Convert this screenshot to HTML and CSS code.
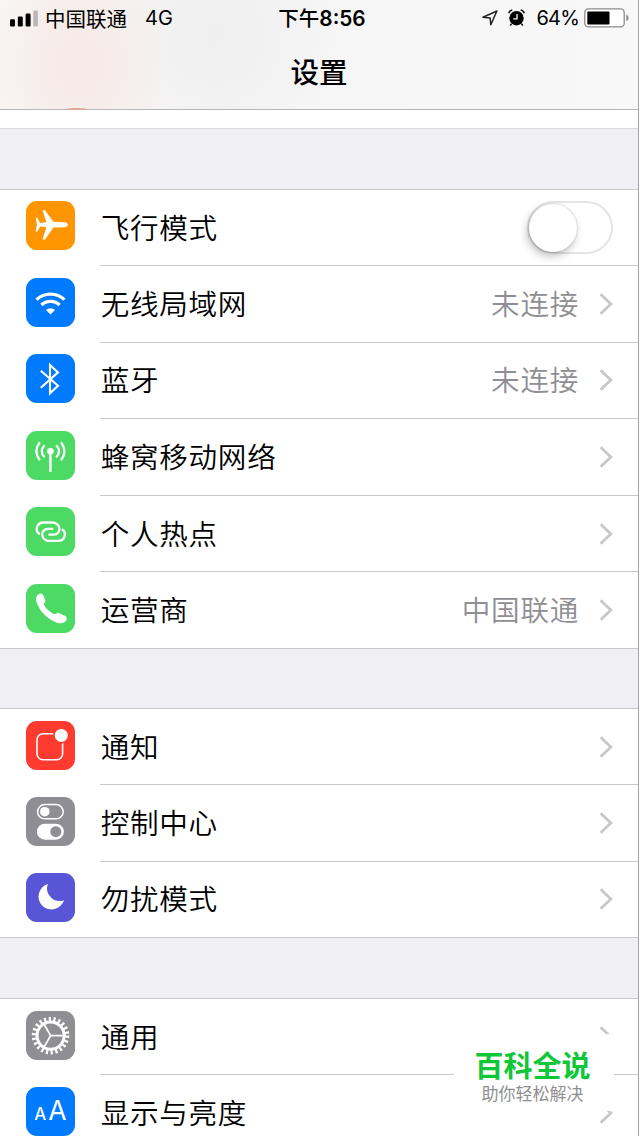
FILE: index.html
```html
<!DOCTYPE html>
<html lang="zh-CN">
<head>
    <meta charset="UTF-8">
    <meta name="viewport" content="width=device-width, initial-scale=1.0">
    <title>设置</title>
    <link rel="stylesheet" href="styles.css">
</head>
<body>
<svg class="defs" width="0" height="0">
    <symbol id="chevron" viewBox="0 0 14 22">
        <path d="M1.6 1.2L11.9 11L1.6 20.8" fill="none" stroke="#c7c7cc" stroke-width="2.8"/>
    </symbol>
</svg>
<div class="phone">
    <header class="header">
        <div class="status-bar">
            <div class="status-left">
                <svg class="signal" width="28" height="17" viewBox="0 0 28 17">
                    <rect x="0" y="9.3" width="5" height="7.2" rx="1.3"/>
                    <rect x="7.8" y="6.6" width="5" height="9.9" rx="1.3"/>
                    <rect x="15.6" y="3.6" width="5" height="12.9" rx="1.3"/>
                    <rect x="23.3" y="0.4" width="4.6" height="16.1" rx="1.3" fill="#b9b8b8"/>
                </svg>
                <span class="carrier">中国联通</span>
                <span class="network">4G</span>
            </div>
            <div class="status-time">下午<b>8:56</b></div>
            <div class="status-right">
                <svg class="location" width="16" height="16" viewBox="0 0 16 16">
                    <path d="M14.9 1L8.8 14.8L8.1 7.9L1 7.2Z" fill="none" stroke="#222" stroke-width="1.5" stroke-linejoin="round"/>
                </svg>
                <svg class="alarm" width="17" height="18" viewBox="0 0 17 18">
                    <circle cx="8.5" cy="9.2" r="7.2"/>
                    <path d="M.8 4.2Q1.5 1.5 4.3 1M16.2 4.2Q15.5 1.5 12.7 1M3.6 14.7L2.2 16.5M13.4 14.7L14.8 16.5" fill="none" stroke="#111" stroke-width="1.5"/>
                    <path d="M9 5v4.8H5.3" fill="none" stroke="#fff" stroke-width="1.3"/>
                </svg>
                <span class="percent">64%</span>
                <svg class="battery" width="46" height="20" viewBox="0 0 46 20">
                    <rect x=".8" y=".9" width="39.4" height="18" rx="3.6" fill="#fff" stroke="#8b8b8b" stroke-width="1.3"/>
                    <rect x="3.3" y="3.5" width="22.2" height="12.9" rx="1"/>
                    <path d="M42.3 6.6Q44.6 7.4 44.6 10T42.3 13.3Z" fill="#8b8b8b"/>
                </svg>
            </div>
        </div>
        <h1 class="title">设置</h1>
        <div class="peek"></div>
    </header>

    <main>
        <div class="group-tail"></div>

        <ul class="group connect">
            <li class="row">
                <svg class="icon orange" viewBox="0 0 49 49">
                    <path fill="#fff" d="M41.8 23.7c0 1.5-1.3 2.5-3.2 2.5L27.4 26.6L19 38.4H16.5L20.4 26.2L14.2 25.5L11.2 30.8H9.7L10.9 23.7L9.7 16.7h1.5L14.2 21.9L20.4 21.2L16.5 9.2H19L27.4 20.8L38.6 21.2c1.9 0 3.2 1 3.2 2.5z"/>
                </svg>
                <div class="cell"><span class="label">飞行模式</span><span class="switch"></span></div>
            </li>
            <li class="row">
                <svg class="icon blue" viewBox="0 0 49 49">
                    <g fill="none" stroke="#fff" stroke-width="3.3">
                        <path d="M10.5 21.6A20.4 20.4 0 0 1 38.5 21.6"/>
                        <path d="M15.4 27A13.2 13.2 0 0 1 33.6 27"/>
                    </g>
                    <path fill="#fff" d="M24.5 36.6L20 32A6.5 6.5 0 0 1 29 32z"/>
                </svg>
                <div class="cell"><span class="label">无线局域网</span><span class="value">未连接</span><svg class="chevron"><use href="#chevron"/></svg></div>
            </li>
            <li class="row">
                <svg class="icon blue" viewBox="0 0 49 49">
                    <path fill="none" stroke="#fff" stroke-width="2.1" d="M14.8 16.8L32 31.8L24 39.3V10.9L32 18.4L14.8 33.8"/>
                </svg>
                <div class="cell"><span class="label">蓝牙</span><span class="value">未连接</span><svg class="chevron"><use href="#chevron"/></svg></div>
            </li>
            <li class="row">
                <svg class="icon green" viewBox="0 0 49 49">
                    <circle cx="24.4" cy="20.2" r="3.3" fill="#fff"/>
                    <g fill="none" stroke="#fff" stroke-width="2.2">
                        <path d="M24.4 21V40.8" stroke-width="2.5"/>
                        <path d="M13.8 11.2Q6.8 20.2 13.8 29.2M35 11.2Q42 20.2 35 29.2M18.6 14.2Q12.8 20.2 18.6 26.2M30.2 14.2Q36 20.2 30.2 26.2"/>
                    </g>
                </svg>
                <div class="cell"><span class="label">蜂窝移动网络</span><svg class="chevron"><use href="#chevron"/></svg></div>
            </li>
            <li class="row">
                <svg class="icon green" viewBox="0 0 49 49">
                    <g fill="none" stroke="#fff" stroke-width="2.3">
                        <path d="M13.8 27.2C8.6 24.4 10.2 15.5 17.6 15.5H25.6C35.4 15.5 36 27.6 27.4 27.6H22.4"/>
                        <path d="M35.8 22.2C41 25 39.4 33.9 32 33.9H24C14.2 33.9 13.6 21.8 22.2 21.8H27.2"/>
                    </g>
                </svg>
                <div class="cell"><span class="label">个人热点</span><svg class="chevron"><use href="#chevron"/></svg></div>
            </li>
            <li class="row">
                <svg class="icon green" viewBox="0 0 49 49">
                    <path fill="#fff" d="M12.6 10.2C14.8 9 16.6 9.6 17.4 11.6L19.4 16.2C20 18 17.8 18.6 17.8 20.2C18.8 23.4 24.6 29 28.2 30C30 30.2 30.8 28.4 32.6 29.1L38.8 31.8C41.4 33 41.2 35 39.8 37C37.6 39.6 34 39.8 30.4 38.4C21 34.8 13 26.8 10.2 17C9.5 14 10.6 11.3 12.6 10.2Z"/>
                </svg>
                <div class="cell"><span class="label">运营商</span><span class="value">中国联通</span><svg class="chevron"><use href="#chevron"/></svg></div>
            </li>
        </ul>

        <ul class="group alerts">
            <li class="row">
                <svg class="icon red" viewBox="0 0 49 49">
                    <rect x="11" y="12.7" width="25.6" height="26" rx="6" fill="none" stroke="#fff" stroke-width="1.6"/>
                    <circle cx="35.3" cy="14.4" r="8.4" fill="#ff3b30"/>
                    <circle cx="35.3" cy="14.4" r="6.5" fill="#fff"/>
                </svg>
                <div class="cell"><span class="label">通知</span><svg class="chevron"><use href="#chevron"/></svg></div>
            </li>
            <li class="row">
                <svg class="icon gray" viewBox="0 0 49 49">
                    <rect x="11.6" y="7.6" width="25.6" height="14.2" rx="7.1" fill="none" stroke="#fff" stroke-width="1.5"/>
                    <circle cx="18.8" cy="14.7" r="4.8" fill="#fff"/>
                    <rect x="10.9" y="26.7" width="27" height="16" rx="8" fill="#fff"/>
                    <circle cx="29.8" cy="34.7" r="5.5" fill="#8e8e93"/>
                </svg>
                <div class="cell"><span class="label">控制中心</span><svg class="chevron"><use href="#chevron"/></svg></div>
            </li>
            <li class="row">
                <svg class="icon purple" viewBox="0 0 49 49">
                    <path fill="#fff" d="M21.9 11A13 13 0 1 0 38 27.2A12.6 12.6 0 0 1 21.9 11Z"/>
                </svg>
                <div class="cell"><span class="label">勿扰模式</span><svg class="chevron"><use href="#chevron"/></svg></div>
            </li>
        </ul>

        <ul class="group general">
            <li class="row">
                <svg class="icon gray" viewBox="0 0 49 49">
                    <g fill="none" stroke="#fff">
                        <circle cx="24.6" cy="24.6" r="13.6" stroke-width="3"/>
                        <circle cx="24.6" cy="24.6" r="16.6" stroke-width="4.4" stroke-dasharray="2.2 2.541"/>
                        <path d="M24.6 24.6H38M24.6 24.6L17.9 13M24.6 24.6L17.9 36.2" stroke-width="1.8"/>
                    </g>
                </svg>
                <div class="cell"><span class="label">通用</span><svg class="chevron"><use href="#chevron"/></svg></div>
            </li>
            <li class="row">
                <svg class="icon blue" viewBox="0 0 49 49">
                    <text class="aa" x="8.2" y="32.6" font-size="16.8" font-weight="500">A</text>
                    <text class="aa" x="22.2" y="33.2" font-size="26.5">A</text>
                </svg>
                <div class="cell"><span class="label">显示与亮度</span><svg class="chevron"><use href="#chevron"/></svg></div>
            </li>
        </ul>
    </main>

    <div class="watermark">
        <strong>百科全说</strong>
        <span>助你轻松解决</span>
    </div>
</div>
</body>
</html>
```

FILE: styles.css
```css
* {
    box-sizing: border-box;
}
body {
    margin: 0;
    font-family: "Noto Sans CJK SC", sans-serif;
    color: #000;
    background: #efeff4;
}
.defs {
    display: block;
}
.phone {
    position: relative;
    width: 639px;
    height: 1136px;
    overflow: hidden;
    background: #efeff4;
    border-right: 1px solid #a3a3a8;
}

/* header */
.header {
    position: relative;
    height: 110px;
    border-bottom: 1px solid #b7b7ba;
    background:
        radial-gradient(ellipse 90px 130px at 80px 66px, #f5e9e6, rgba(245, 233, 230, 0.6) 50%, rgba(245, 233, 230, 0)),
        radial-gradient(ellipse 120px 120px at 215px 36px, #efeff0, rgba(239, 239, 240, 0)),
        linear-gradient(90deg, #f9f5f4, #f6f5f5 40%, #f8f8f8);
}
.status-bar {
    display: grid;
    grid-template-columns: 1fr auto 1fr;
    align-items: center;
    height: 34px;
    padding: 0 9px 0 10px;
    font-size: 20.5px;
    line-height: 34px;
}
.status-left, .status-right {
    display: flex;
    align-items: center;
}
.status-right {
    justify-content: flex-end;
}
.signal {
    margin-right: 7px;
}
.carrier {
    margin-top: -1px;
}
.network {
    margin-left: 18px;
    font-family: Inter, sans-serif;
    font-size: 20px;
}
.status-time {
    padding-left: 5px;
    font-size: 20.5px;
    font-weight: 500;
}
.status-time b {
    font-family: Inter, sans-serif;
    font-weight: 600;
    font-size: 20.8px;
}
.location {
    margin-right: 10px;
}
.alarm {
    margin-right: 11px;
}
.percent {
    margin-right: 5px;
    font-family: Inter, sans-serif;
    font-size: 20px;
    letter-spacing: -0.8px;
}
.battery {
    margin-right: -1px;
}
.title {
    margin: 0;
    font-size: 28.5px;
    font-weight: 500;
    line-height: 74px;
    text-align: center;
}
.peek {
    position: absolute;
    left: 67px;
    bottom: -1px;
    width: 19px;
    height: 2px;
    border-radius: 50% 50% 0 0;
    background: #dca795;
}

/* list groups */
.group-tail {
    height: 19px;
    background: #fff;
    border-bottom: 1px solid #d9d9de;
}
.group {
    margin: 60px 0 0;
    padding: 0;
    list-style: none;
    background: #fff;
    border-top: 1px solid #c8c7cc;
}
.connect .row {
    height: 76.6px;
}
.connect .row:first-child {
    height: 76px;
}
.connect .row:first-child .icon {
    margin-top: 11px;
}
.alerts {
    margin-top: 59px;
}
.alerts .row {
    height: 76.33px;
}
.general .row {
    height: 76.33px;
}
.row {
    display: flex;
    padding-left: 26px;
}
.row:last-child {
    border-bottom: 1px solid #c8c7cc;
}
.row:last-child .cell {
    border-bottom-color: transparent;
    margin-bottom: -1px;
}
.icon {
    flex: none;
    width: 49px;
    height: 49px;
    margin-top: 11.7px;
    border-radius: 11px;
}
.orange { background: #ff9500; }
.blue { background: #007aff; }
.green { background: #4cd964; }
.red { background: #ff3b30; }
.gray { background: #8e8e93; }
.purple { background: #5856d6; }
.aa {
    fill: #fff;
    font-family: Inter, sans-serif;
}
.cell {
    display: flex;
    align-items: center;
    flex: 1;
    margin-left: 25px;
    padding-right: 25px;
    border-bottom: 1px solid #c8c7cc;
}
.label, .value {
    font-size: 28.6px;
    font-weight: 350;
    line-height: 42px;
    letter-spacing: 0.7px;
    margin-top: -2px;
}
.label {
    flex: 1;
    padding-left: 0.7px;
}
.value {
    margin-right: 20px;
    color: #8e8e93;
}
.chevron {
    width: 14px;
    height: 22px;
}
.switch {
    width: 86px;
    height: 53px;
    padding: 1px;
    border: 2px solid #e5e5e5;
    border-radius: 27px;
}
.switch::before {
    content: "";
    display: block;
    width: 48px;
    height: 48px;
    margin-left: -1px;
    border-radius: 50%;
    background: #fff;
    box-shadow: 0 0 1px 1px rgba(0, 0, 0, 0.1), -2px 4px 8px rgba(0, 0, 0, 0.25);
}

/* floating badge in the corner */
.watermark {
    position: absolute;
    left: 454px;
    top: 1034px;
    width: 160px;
    height: 77px;
    padding-top: 9px;
    display: flex;
    flex-direction: column;
    align-items: center;
    background: #fff;
}
.watermark strong {
    margin-right: 3px;
    color: #0fc738;
    font-size: 29px;
    font-weight: 700;
    line-height: 42px;
}
.watermark span {
    margin-right: 3px;
    color: #8f8f8f;
    font-size: 17px;
    line-height: 15px;
}
```
